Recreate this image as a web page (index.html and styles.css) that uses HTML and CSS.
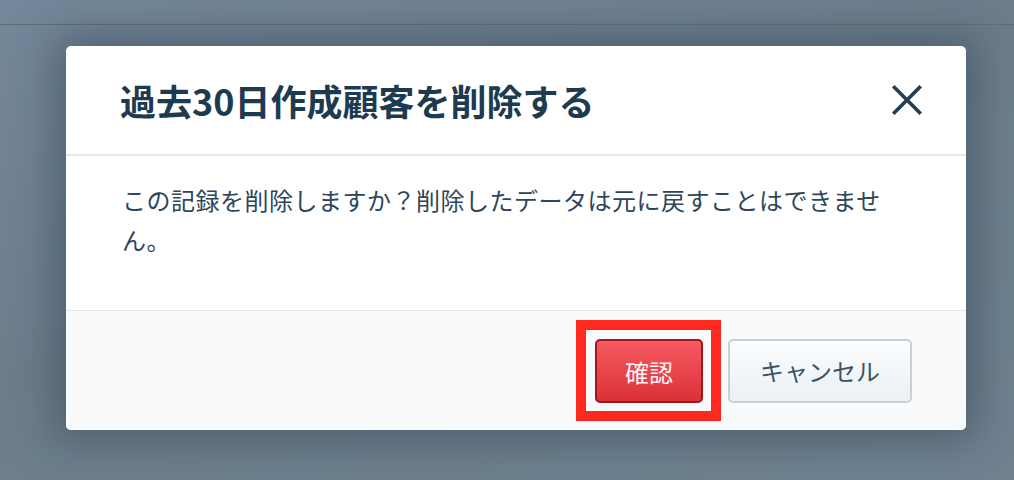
FILE: index.html
```html
<!DOCTYPE html>
<html lang="ja">
<head>
  <meta charset="UTF-8">
  <title>顧客削除</title>
  <link rel="stylesheet" href="styles.css">
</head>
<body>
  <!-- 上部バー -->
  <div class="top-bar"></div>

  <!-- 削除確認ダイアログ -->
  <div class="modal">
    <div class="modal-header">
      <h2 class="modal-title">過去30日作成顧客を削除する</h2>
      <button class="close-button" aria-label="閉じる">
        <svg width="30" height="30" viewBox="0 0 30 30">
          <path d="M2.5 2.5 L27.5 27.5 M27.5 2.5 L2.5 27.5" stroke="#243d53" stroke-width="3.6" stroke-linecap="square" fill="none"/>
        </svg>
      </button>
    </div>

    <div class="modal-body">
      この記録を削除しますか？削除したデータは元に戻すことはできません。
    </div>

    <div class="modal-footer">
      <span class="highlight">
        <button class="btn btn-danger">確認</button>
      </span>
      <button class="btn btn-default">キャンセル</button>
    </div>
  </div>
</body>
</html>
```

FILE: styles.css
```css
/* ベース */
body {
  margin: 0;
  height: 480px;
  overflow: hidden;
  font-family: "Noto Sans CJK JP", "Noto Sans", sans-serif;
  background: linear-gradient(160deg, #75879a 0%, #6c7d8b 45%, #708290 100%);
}

/* 上部バー */
.top-bar {
  height: 24px;
  border-bottom: 1px solid #5d6e7b;
}

/* ダイアログ */
.modal {
  width: 900px;
  margin: 21px 0 0 66px;
  background-color: #fff;
  border-radius: 5px;
  overflow: hidden;
  box-shadow: 0 0 40px 12px rgba(50, 66, 82, 0.5);
}
.modal-header {
  height: 108px;
  display: flex;
  align-items: center;
  justify-content: space-between;
  padding: 0 44px 0 54px;
  border-bottom: 2px solid #e1e8ee;
}
.modal-title {
  margin: 0;
  font-size: 36px;
  font-weight: bold;
  color: #1e3a51;
}
.close-button {
  width: 30px;
  height: 30px;
  padding: 0;
  border: none;
  background: none;
  cursor: pointer;
}
.close-button svg {
  display: block;
}

.modal-body {
  padding: 24px 70px 50px 56px;
  font-size: 24px;
  line-height: 40px;
  letter-spacing: 0.5px;
  color: #2d465b;
}

/* フッター */
.modal-footer {
  height: 119px;
  display: flex;
  align-items: center;
  justify-content: flex-end;
  gap: 7px;
  padding-right: 54px;
  border-top: 1px solid #e1e8ee;
  background-color: #f8fafc;
}

/* 赤枠（強調） */
.highlight {
  display: block;
  padding: 9px 8px 8px 9px;
  border: 10px solid #ff2a1f;
}

/* ボタン */
.btn {
  display: block;
  height: 64px;
  font-family: "Noto Sans CJK JP", "Noto Sans", sans-serif;
  font-size: 24px;
  border-radius: 5px;
  cursor: pointer;
}
.btn-danger {
  width: 108px;
  color: #fff3f3;
  background: linear-gradient(#f65a60, #db3139);
  border: 2px solid #a3161e;
}
.btn-default {
  width: 184px;
  color: #3b5366;
  background: linear-gradient(#fcfdfe, #eaf0f3);
  border: 2px solid #c5d0d9;
}
```
